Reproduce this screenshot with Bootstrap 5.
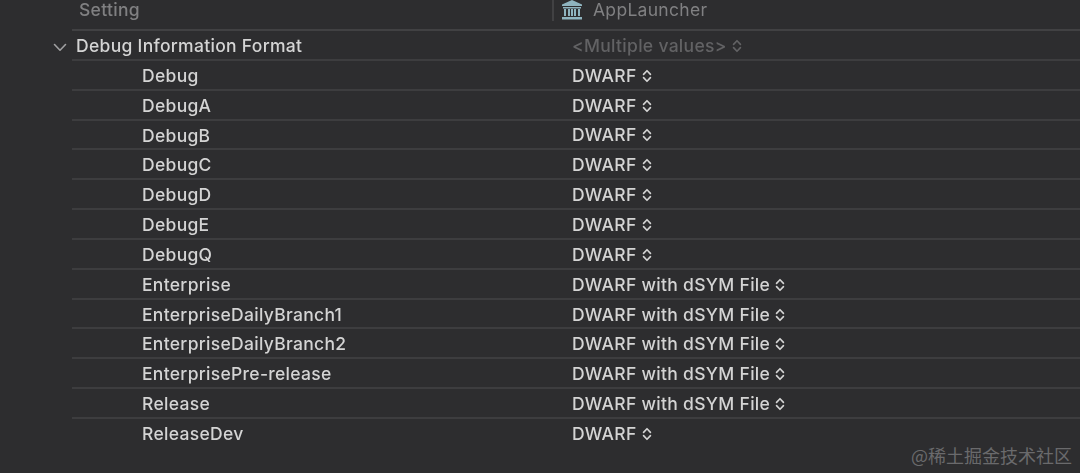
<!DOCTYPE html>
<html><head><meta charset="utf-8"><title>Build Settings</title>
<link href="https://cdn.jsdelivr.net/npm/bootstrap@5.3.0/dist/css/bootstrap.min.css" rel="stylesheet">
<style>
html,body{height:473px;overflow:hidden}
body{background:#2d2d2f;color:#d4d4d4;font-family:Inter,"Liberation Sans",sans-serif;font-size:17.5px;font-weight:500;letter-spacing:.3px;position:relative}
.grid-head{height:31px;color:#808082;margin-left:72px;border-bottom:2px solid #414143;filter:blur(.35px)}
.set-row{height:29.85px;margin-left:72px;border-bottom:2px solid #3d3d3f;line-height:30px;white-space:nowrap}
.set-row:last-child{border-bottom:0}
.set-row:last-child .col-val{padding-top:0}
main{filter:blur(.35px)}
.col-name{width:480px;flex:none}
.col-name.child{padding-left:70px}
.col-name.head{padding-left:7px;line-height:20px}
.col-name.top{padding-left:4px}
.col-val{padding-left:20px;padding-top:2px;line-height:24px}
.head-val{border-left:2px solid #414143;height:22px;padding-left:7px;gap:10px;line-height:20px;margin-top:-1px;font-weight:400}
.muted-val{color:#626264}
.stepper{width:10px;height:14px;margin-left:5px;flex:none}
.disc{position:absolute;left:53px;top:43px;width:14px;height:9px}
.mark-wm{position:absolute;right:8px;top:444px;font-family:"Noto Sans CJK SC","Liberation Sans",sans-serif;font-size:18px;font-weight:400;letter-spacing:0;line-height:22px;color:#6a6a6c;white-space:nowrap}
</style></head><body>
<svg width="0" height="0" class="position-absolute"><defs><symbol id="st" viewBox="0 0 9 13"><path d="M1.3 5 4.5 1.6 7.7 5M1.3 8 4.5 11.4 7.7 8" fill="none" stroke="currentColor" stroke-width="1.5" stroke-linecap="round" stroke-linejoin="round"/></symbol></defs></svg>
<div class="d-flex grid-head">
  <div class="col-name head">Setting</div>
  <div class="head-val d-flex align-items-center">
    <svg width="22" height="20" viewBox="0 0 22 20" fill="#8fb4bf"><path d="M11 0 21 4.5V6H1V4.5Z"/><rect x="2" y="7" width="18" height="1.5"/><rect x="3" y="9" width="2" height="7"/><rect x="7" y="9" width="2" height="7"/><rect x="13" y="9" width="2" height="7"/><rect x="17" y="9" width="2" height="7"/><rect x="10" y="9" width="2" height="7"/><rect x="1" y="17" width="20" height="2.5"/></svg>
    <span>AppLauncher</span>
  </div>
</div>
<svg class="disc" viewBox="0 0 14 9"><path d="M1.5 1.5 7 7.2 12.5 1.5" fill="none" stroke="#a0a0a2" stroke-width="1.6" stroke-linecap="round" stroke-linejoin="round"/></svg>
<main>
<div class="d-flex set-row"><div class="col-name top">Debug Information Format</div><div class="col-val d-flex align-items-center muted-val">&lt;Multiple values&gt;<svg class="stepper"><use href="#st"/></svg></div></div>
<div class="d-flex set-row"><div class="col-name child">Debug</div><div class="col-val d-flex align-items-center">DWARF<svg class="stepper"><use href="#st"/></svg></div></div>
<div class="d-flex set-row"><div class="col-name child">DebugA</div><div class="col-val d-flex align-items-center">DWARF<svg class="stepper"><use href="#st"/></svg></div></div>
<div class="d-flex set-row"><div class="col-name child">DebugB</div><div class="col-val d-flex align-items-center">DWARF<svg class="stepper"><use href="#st"/></svg></div></div>
<div class="d-flex set-row"><div class="col-name child">DebugC</div><div class="col-val d-flex align-items-center">DWARF<svg class="stepper"><use href="#st"/></svg></div></div>
<div class="d-flex set-row"><div class="col-name child">DebugD</div><div class="col-val d-flex align-items-center">DWARF<svg class="stepper"><use href="#st"/></svg></div></div>
<div class="d-flex set-row"><div class="col-name child">DebugE</div><div class="col-val d-flex align-items-center">DWARF<svg class="stepper"><use href="#st"/></svg></div></div>
<div class="d-flex set-row"><div class="col-name child">DebugQ</div><div class="col-val d-flex align-items-center">DWARF<svg class="stepper"><use href="#st"/></svg></div></div>
<div class="d-flex set-row"><div class="col-name child">Enterprise</div><div class="col-val d-flex align-items-center">DWARF with dSYM File<svg class="stepper"><use href="#st"/></svg></div></div>
<div class="d-flex set-row"><div class="col-name child">EnterpriseDailyBranch1</div><div class="col-val d-flex align-items-center">DWARF with dSYM File<svg class="stepper"><use href="#st"/></svg></div></div>
<div class="d-flex set-row"><div class="col-name child">EnterpriseDailyBranch2</div><div class="col-val d-flex align-items-center">DWARF with dSYM File<svg class="stepper"><use href="#st"/></svg></div></div>
<div class="d-flex set-row"><div class="col-name child">EnterprisePre-release</div><div class="col-val d-flex align-items-center">DWARF with dSYM File<svg class="stepper"><use href="#st"/></svg></div></div>
<div class="d-flex set-row"><div class="col-name child">Release</div><div class="col-val d-flex align-items-center">DWARF with dSYM File<svg class="stepper"><use href="#st"/></svg></div></div>
<div class="d-flex set-row"><div class="col-name child">ReleaseDev</div><div class="col-val d-flex align-items-center">DWARF<svg class="stepper"><use href="#st"/></svg></div></div>
</main>
<div class="mark-wm">@稀土掘金技术社区</div>
<script src="https://cdn.jsdelivr.net/npm/bootstrap@5.3.0/dist/js/bootstrap.bundle.min.js"></script>
</body></html>
